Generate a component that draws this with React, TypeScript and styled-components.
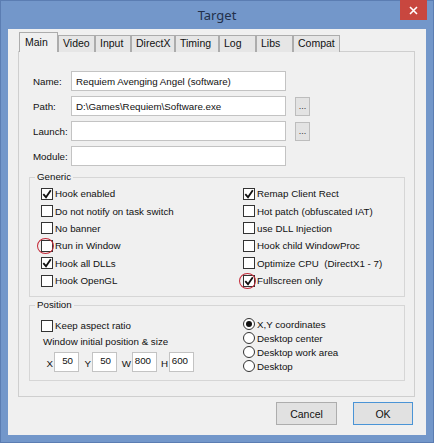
import styled, { createGlobalStyle, css } from "styled-components";

const GlobalStyle = createGlobalStyle`
  html, body { margin: 0; padding: 0; background: #7194c8; }
  body {
    font-family: "Liberation Sans", Arial, sans-serif;
    font-size: 9.75px;
    color: #111;
  }
`;

const Frame = styled.div`
  width: 434px;
  height: 443px;
  box-sizing: border-box;
  display: flex;
  flex-direction: column;
  background: #7397ca;
  border: 1px solid #5b7db2;
  padding: 0 7px 7px 7px;
`;

const TitleBar = styled.div`
  height: 28px;
  flex: none;
  display: grid;
  grid-template-columns: 1fr auto 1fr;
  align-items: center;
`;

const TitleText = styled.div`
  grid-column: 2;
  font-family: "Noto Sans", "Open Sans", sans-serif;
  font-size: 13px;
  color: #22304a;
`;

const CloseButton = styled.div`
  grid-column: 3;
  justify-self: end;
  align-self: start;
  width: 27px;
  height: 20px;
  margin: -1px -1px 0 0;
  background: #c8473f;
  display: flex;
  align-items: center;
  justify-content: center;
`;

const Client = styled.div`
  flex: 1;
  background: #f0f0f0;
  padding: 3px 11px 0 10px;
  display: flex;
  flex-direction: column;
`;

const TabStrip = styled.div`
  display: flex;
  align-items: flex-end;
  padding-left: 1px;
  margin-bottom: -1px;
  position: relative;
  z-index: 1;
`;

const Tab = styled.div<{ $active?: boolean; $w: number }>`
  box-sizing: border-box;
  width: ${(p) => p.$w}px;
  height: ${(p) => (p.$active ? 20 : 17)}px;
  border: 1px solid #acacac;
  border-bottom: none;
  background: ${(p) => (p.$active ? "#f0f0f0" : "#e6e6e6")};
  font-size: 10.5px;
  padding: ${(p) => (p.$active ? "3px 0 0 5px" : "1px 0 0 4px")};
  white-space: nowrap;
`;

const Panel = styled.div`
  height: 346px;
  box-sizing: border-box;
  border: 1px solid #cfcfcf;
  padding: 19px 9px 0 10px;
  display: flex;
  flex-direction: column;
`;

const FormGrid = styled.div`
  display: grid;
  grid-template-columns: 38px 215px auto;
  grid-auto-rows: 20px;
  row-gap: 5px;
  padding-left: 4px;
  align-items: center;
`;

const FieldLabel = styled.div`
  grid-column: 1;
`;

const TextBox = styled.input<{ $align?: string }>`
  box-sizing: border-box;
  height: 20px;
  width: 100%;
  margin: 0;
  border: 1px solid #c3c3c3;
  background: #fff;
  font-family: inherit;
  font-size: 9.75px;
  color: #111;
  padding: 0 4px;
  outline: none;
  text-align: ${(p) => p.$align || "left"};
`;

const BrowseButton = styled.div`
  grid-column: 3;
  box-sizing: border-box;
  width: 15px;
  height: 19px;
  margin-left: 9px;
  border: 1px solid #bdbdbd;
  background: #e3e3e3;
  color: #333;
  font-size: 9px;
  display: flex;
  align-items: flex-end;
  justify-content: center;
  padding-bottom: 4px;
`;

const Group = styled.fieldset<{ $top: number }>`
  margin: ${(p) => p.$top}px 0 0 0;
  min-inline-size: 0;
  border: 1px solid #d6d6d6;
  padding: 0 10px 7px 11px;
`;

const Legend = styled.legend`
  padding: 0 2px;
  margin-left: -6px;
  font-size: 9.75px;
  line-height: 12px;
`;

const CheckGrid = styled.div`
  display: grid;
  grid-template-columns: 202px 1fr;
  grid-template-rows: repeat(6, 17.4px);
  grid-auto-flow: column;
  padding-top: 2px;
`;

const CheckRow = styled.div<{ $h?: number }>`
  display: flex;
  align-items: center;
  gap: 2px;
  height: ${(p) => p.$h ?? 17.4}px;
  white-space: pre;
`;

const Box = styled.span<{ $circled?: boolean }>`
  position: relative;
  flex: none;
  width: 12px;
  height: 12px;
  box-sizing: border-box;
  border: 1px solid #333;
  background: #fff;
  display: flex;
  align-items: center;
  justify-content: center;
  ${(p) =>
    p.$circled &&
    css`
      &::after {
        content: "";
        position: absolute;
        left: -5px;
        top: -3px;
        width: 17px;
        height: 16px;
        box-sizing: border-box;
        border: 1.5px solid #c42a38;
        border-radius: 50%;
      }
    `}
`;

const Radio = styled.span<{ $on?: boolean }>`
  flex: none;
  width: 12px;
  height: 12px;
  box-sizing: border-box;
  border: 1px solid #333;
  border-radius: 50%;
  background: #fff;
  display: flex;
  align-items: center;
  justify-content: center;
  &::after {
    content: "";
    width: 6px;
    height: 6px;
    border-radius: 50%;
    background: ${(p) => (p.$on ? "#111" : "transparent")};
  }
`;

const PositionGrid = styled.div`
  display: grid;
  grid-template-columns: 202px 1fr;
  padding-top: 6px;
`;

const PositionLeft = styled.div`
  display: flex;
  flex-direction: column;
`;

const Caption = styled.div`
  height: 15px;
  line-height: 15px;
  padding-left: 2px;
`;

const SizeRow = styled.div`
  display: grid;
  grid-template-columns: 13px 25px 13px 25px 15px 25px 12px 25px;
  align-items: center;
  margin-top: 3px;
  height: 20px;
`;

const SizeLabel = styled.span`
  text-align: right;
  padding-right: 1px;
  padding-top: 3px;
`;

const NumBox = styled(TextBox)`
  padding: 0 5px 3px 0;
`;

const RadioList = styled.div`
  display: flex;
  flex-direction: column;
`;

const ButtonRow = styled.div`
  display: flex;
  justify-content: flex-end;
  gap: 16px;
  margin-top: 5px;
  padding-right: 2px;
`;

const DialogButton = styled.div<{ $default?: boolean }>`
  box-sizing: border-box;
  width: ${(p) => (p.$default ? 60 : 61)}px;
  height: 23px;
  border: 1px solid ${(p) => (p.$default ? "#4a94d6" : "#adadad")};
  background: #e1e1e1;
  font-size: 10.5px;
  display: flex;
  align-items: center;
  justify-content: center;
`;

const Tick = () => (
  <svg width="10" height="10" viewBox="0 0 10 10">
    <path d="M1.3 5.2 L4 8.2 L8.8 1.2" fill="none" stroke="#111" strokeWidth="1.8" />
  </svg>
);

const Check = ({
  label,
  on,
  circled,
}: {
  label: string;
  on?: boolean;
  circled?: boolean;
}) => (
  <CheckRow>
    <Box $circled={circled}>{on && <Tick />}</Box>
    <span>{label}</span>
  </CheckRow>
);

const tabs = [
  { name: "Main", w: 39 },
  { name: "Video", w: 37 },
  { name: "Input", w: 36 },
  { name: "DirectX", w: 44 },
  { name: "Timing", w: 44 },
  { name: "Log", w: 37 },
  { name: "Libs", w: 37 },
  { name: "Compat", w: 47 },
];

const generic = [
  { label: "Hook enabled", on: true },
  { label: "Do not notify on task switch" },
  { label: "No banner" },
  { label: "Run in Window", circled: true },
  { label: "Hook all DLLs", on: true },
  { label: "Hook OpenGL" },
  { label: "Remap Client Rect", on: true },
  { label: "Hot patch (obfuscated IAT)" },
  { label: "use DLL Injection" },
  { label: "Hook child WindowProc" },
  { label: "Optimize CPU  (DirectX1 - 7)" },
  { label: "Fullscreen only", on: true, circled: true },
];

const radios = ["X,Y coordinates", "Desktop center", "Desktop work area", "Desktop"];

export default function App() {
  return (
    <>
      <GlobalStyle />
      <Frame>
        <TitleBar>
          <TitleText>Target</TitleText>
          <CloseButton>
            <svg width="9" height="9" viewBox="0 0 9 9">
              <path d="M1 1 L8 8 M8 1 L1 8" stroke="#fff" strokeWidth="1.6" />
            </svg>
          </CloseButton>
        </TitleBar>
        <Client>
          <TabStrip>
            {tabs.map((t, i) => (
              <Tab key={t.name} $w={t.w} $active={i === 0}>
                {t.name}
              </Tab>
            ))}
          </TabStrip>
          <Panel>
            <FormGrid>
              <FieldLabel>Name:</FieldLabel>
              <TextBox readOnly value="Requiem Avenging Angel (software)" />
              <span />
              <FieldLabel>Path:</FieldLabel>
              <TextBox readOnly value="D:\Games\Requiem\Software.exe" />
              <BrowseButton>...</BrowseButton>
              <FieldLabel>Launch:</FieldLabel>
              <TextBox readOnly value="" />
              <BrowseButton>...</BrowseButton>
              <FieldLabel>Module:</FieldLabel>
              <TextBox readOnly value="" />
              <span />
            </FormGrid>
            <Group $top={5}>
              <Legend>Generic</Legend>
              <CheckGrid>
                {generic.map((g) => (
                  <Check key={g.label} label={g.label} on={g.on} circled={g.circled} />
                ))}
              </CheckGrid>
            </Group>
            <Group $top={2}>
              <Legend>Position</Legend>
              <PositionGrid>
                <PositionLeft>
                  <CheckRow $h={17}>
                    <Box />
                    <span>Keep aspect ratio</span>
                  </CheckRow>
                  <Caption>Window initial position &amp; size</Caption>
                  <SizeRow>
                    <SizeLabel>X</SizeLabel>
                    <NumBox readOnly value="50" $align="right" />
                    <SizeLabel>Y</SizeLabel>
                    <NumBox readOnly value="50" $align="right" />
                    <SizeLabel>W</SizeLabel>
                    <NumBox readOnly value="800" $align="right" />
                    <SizeLabel>H</SizeLabel>
                    <NumBox readOnly value="600" $align="right" />
                  </SizeRow>
                </PositionLeft>
                <RadioList>
                  {radios.map((r, i) => (
                    <CheckRow key={r} $h={14}>
                      <Radio $on={i === 0} />
                      <span>{r}</span>
                    </CheckRow>
                  ))}
                </RadioList>
              </PositionGrid>
            </Group>
          </Panel>
          <ButtonRow>
            <DialogButton>Cancel</DialogButton>
            <DialogButton $default>OK</DialogButton>
          </ButtonRow>
        </Client>
      </Frame>
    </>
  );
}
